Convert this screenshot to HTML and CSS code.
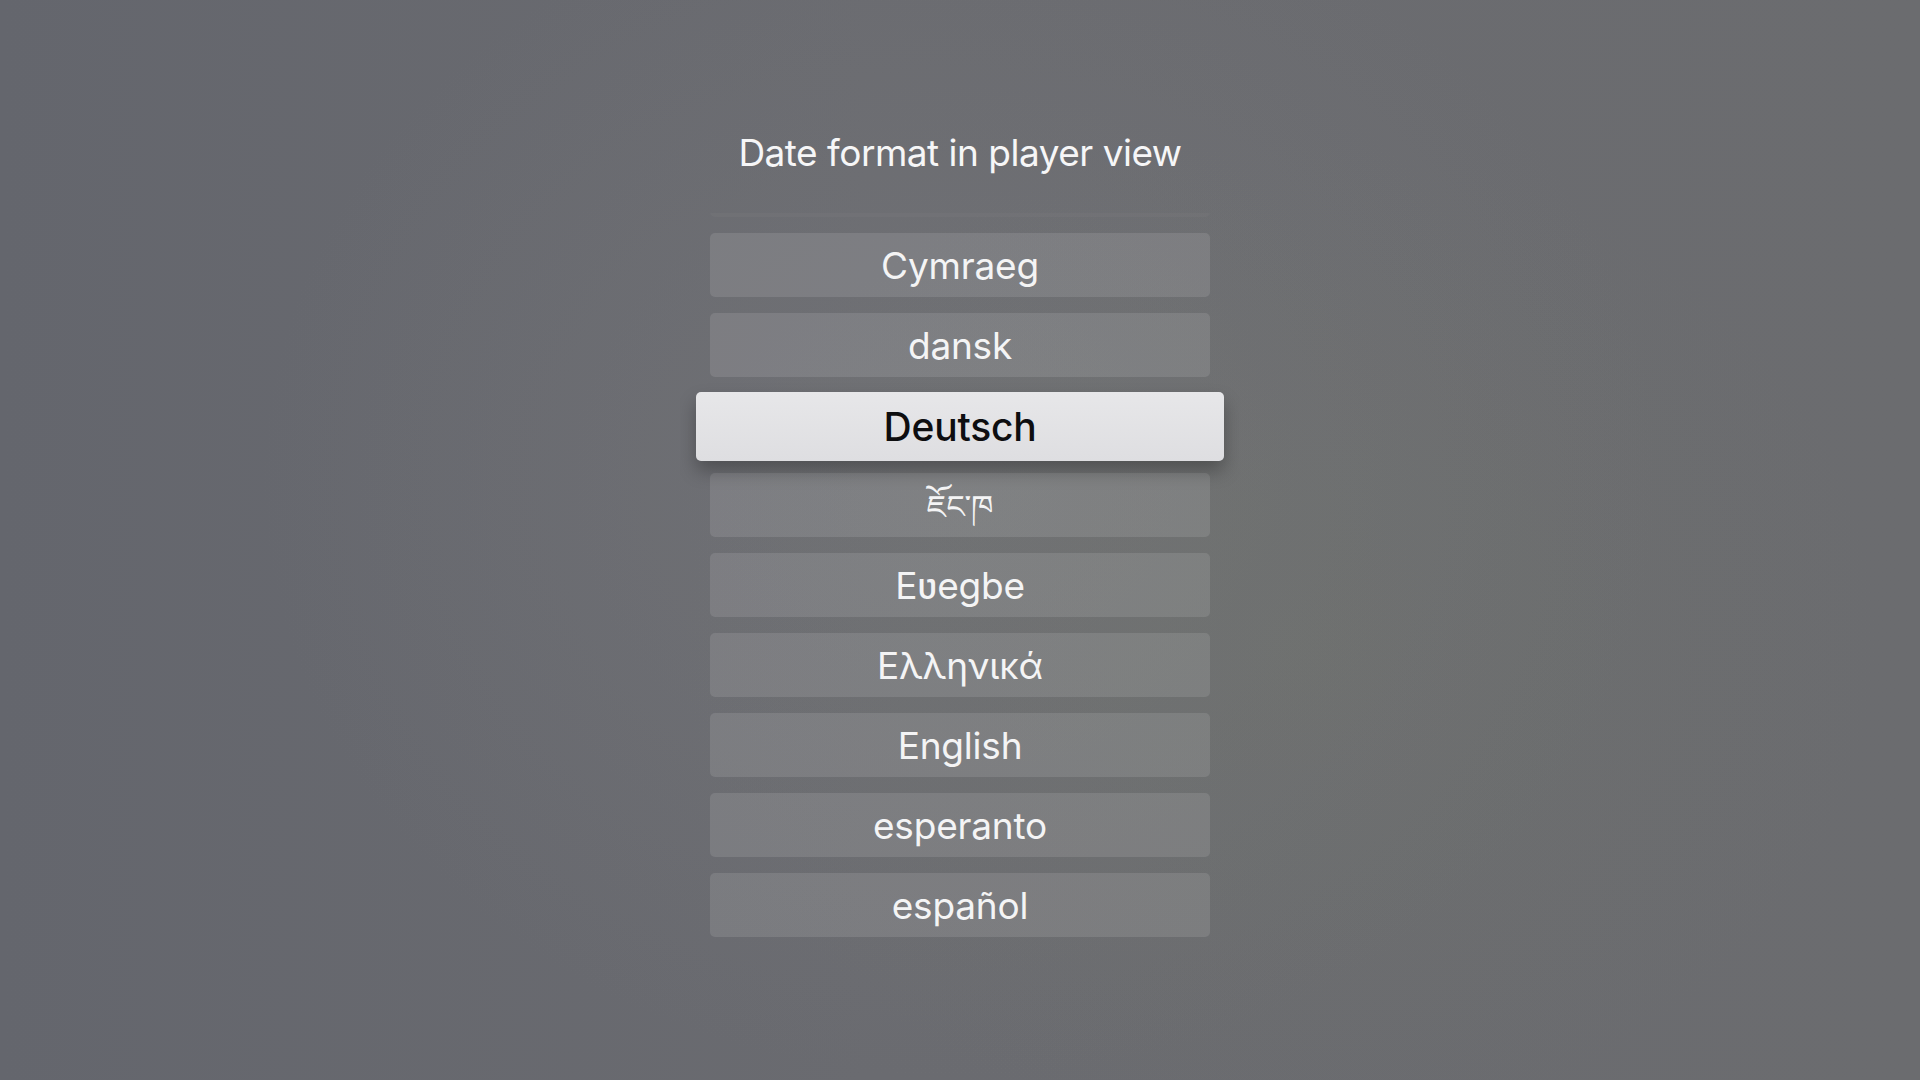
FILE: index.html
```html
<!DOCTYPE html>
<html>
<head>
  <title>Date format in player view</title>
  <link rel="stylesheet" href="styles.css">
</head>
<body>
  <div class="screen">
    <h1 class="title">Date format in player view</h1>

    <div class="list-clip">
      <ul class="lang-list">
        <!-- previous entry, scrolled almost out of view -->
        <li class="lang faded" aria-hidden="true"></li>
        <li class="lang">Cymraeg</li>
        <li class="lang">dansk</li>
        <li class="lang focused">Deutsch</li>
        <li class="lang tibetan">ཇོང་ཁ</li>
        <li class="lang">Eʋegbe</li>
        <li class="lang">Ελληνικά</li>
        <li class="lang">English</li>
        <li class="lang">esperanto</li>
        <li class="lang">español</li>
      </ul>
    </div>
  </div>
</body>
</html>
```

FILE: styles.css
```css
body {
  margin: 0;
  padding: 0;
  width: 1920px;
  height: 1080px;
  overflow: hidden;
  font-family: Inter, "Noto Sans", "DejaVu Sans", sans-serif;
  color: #f4f4f5;
  background-color: #6a6b70;
  background-image:
    radial-gradient(ellipse 600px 500px at 1280px 640px, rgba(114, 118, 108, 0.35), rgba(114, 118, 108, 0)),
    radial-gradient(ellipse 700px 600px at 960px 480px, rgba(120, 121, 124, 0.45), rgba(120, 121, 124, 0)),
    linear-gradient(90deg, #64666d 0%, #6a6b70 45%, #6b6c6f 100%);
}

.screen {
  display: flex;
  flex-direction: column;
  align-items: center;
}

.title {
  margin: 130px 0 0;
  font-size: 37px;
  line-height: 46px;
  font-weight: 400;
  letter-spacing: -0.5px;
  color: #f6f6f7;
}

.list-clip {
  margin-top: 37px;
  padding: 0 30px 30px;
  overflow: hidden;
}

.lang-list {
  list-style: none;
  margin: -60px 0 0;
  padding: 0;
  display: flex;
  flex-direction: column;
  gap: 16px;
}

.lang {
  width: 500px;
  height: 64px;
  border-radius: 5px;
  background-color: rgba(255, 255, 255, 0.11);
  display: flex;
  align-items: center;
  justify-content: center;
  font-size: 37px;
  font-weight: 400;
  letter-spacing: -0.2px;
}

.lang.faded {
  opacity: 0.25;
}

.lang.tibetan {
  box-sizing: border-box;
  padding-top: 22px;
  font-family: "Noto Sans Tibetan", "Noto Serif Tibetan", "Jomolhari", Inter, sans-serif;
  font-size: 32px;
  line-height: 1;
}

.lang.focused {
  width: 528px;
  height: 69px;
  margin: -1px -14px -4px;
  background: linear-gradient(180deg, #e7e7e9 0%, #dedee1 100%);
  color: #0e0e10;
  font-size: 39px;
  font-weight: 500;
  box-shadow: 0 10px 18px rgba(0, 0, 0, 0.28);
  position: relative;
}
```
